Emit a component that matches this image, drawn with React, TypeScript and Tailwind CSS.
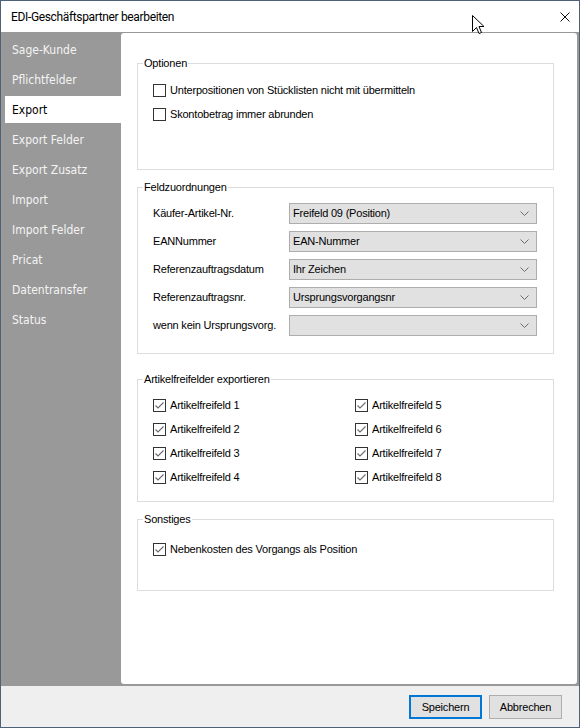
import React from 'react';

const NAV = ['Sage-Kunde', 'Pflichtfelder', 'Export', 'Export Felder', 'Export Zusatz', 'Import', 'Import Felder', 'Pricat', 'Datentransfer', 'Status'];

function CheckBox({ checked }: { checked?: boolean }) {
    return (
        <span className="flex h-[13px] w-[13px] shrink-0 items-center justify-center border border-[#333333] bg-white">
            {checked && (
                <svg width="11" height="11" viewBox="0 0 11 11">
                    <path d="M1.5 5.5 L4 8 L9.5 2.5" fill="none" stroke="#6a6a6a" strokeWidth="1.1" />
                </svg>
            )}
        </span>
    );
}

function Check({ label, checked }: { label: string; checked?: boolean }) {
    return (
        <div className="flex h-[24px] items-center gap-[4px]">
            <CheckBox checked={checked} />
            <span>{label}</span>
        </div>
    );
}

function Combo({ value }: { value: string }) {
    return (
        <div className="flex h-[21px] w-[248px] items-center justify-between border border-[#adadad] bg-[#e1e1e1] pl-[3px] pr-[7px]">
            <span>{value}</span>
            <svg width="9" height="5" viewBox="0 0 9 5">
                <path d="M0.5 0.5 L4.5 4.5 L8.5 0.5" fill="none" stroke="#6d6d6d" strokeWidth="1" />
            </svg>
        </div>
    );
}

function Group({ title, className, children }: { title: string; className: string; children?: React.ReactNode }) {
    return (
        <div className={`relative w-[417px] border border-[#dcdcdc] ${className}`}>
            <span className="absolute -top-[8px] left-[5px] bg-white px-[1px] leading-[14px]">{title}</span>
            {children}
        </div>
    );
}

export default function App() {
    return (
        <div className="relative flex h-[728px] w-[580px] flex-col overflow-hidden border border-[#4d6278] bg-white font-['Liberation_Sans',Arial,sans-serif] text-[11px] tracking-[-0.2px] text-black">
            {/* title bar */}
            <div className="flex h-[31px] shrink-0 items-center justify-between bg-white pl-[10px] pr-[9px]">
                <span className="font-['Roboto',sans-serif] text-[12px] tracking-[-0.35px]">EDI-Geschäftspartner bearbeiten</span>
                <svg width="10" height="10" viewBox="0 0 10 10">
                    <path d="M0.5 0.5 L9.5 9.5 M9.5 0.5 L0.5 9.5" stroke="#111111" strokeWidth="1" />
                </svg>
            </div>

            {/* mouse cursor */}
            <svg className="absolute left-[471px] top-[14px]" width="13" height="20" viewBox="0 0 13 20">
                <path d="M0.5 0.5 L0.5 16.5 L4.5 12.5 L7 18.5 L9.5 17.5 L7 11.5 L12 11.5 Z" fill="white" stroke="black" strokeWidth="1" strokeLinejoin="round" />
            </svg>

            <div className="flex flex-1 bg-[#999999] pb-[2px] pr-[2px] pt-[1px]">
                {/* sidebar */}
                <div className="w-[120px] shrink-0 pl-[4px] pt-[3px] font-['DejaVu_Sans_Condensed','DejaVu_Sans',sans-serif] text-[12px] tracking-normal">
                    {NAV.map(n => (
                        <div key={n} className={`mb-[3px] flex h-[27px] items-center pl-[7px] ${n === 'Export' ? 'bg-white text-black' : 'text-[#f4f4f4]'}`}>
                            {n}
                        </div>
                    ))}
                </div>

                {/* content panel */}
                <div className="flex-1 rounded-[3px] bg-white pl-[16px]">
                    <Group title="Optionen" className="mt-[30px] h-[107px] pl-[15px] pt-[14px]">
                        <Check label="Unterpositionen von Stücklisten nicht mit übermitteln" />
                        <Check label="Skontobetrag  immer abrunden" />
                    </Group>

                    <Group title="Feldzuordnungen" className="mt-[17px] h-[167px] pl-[15px] pt-[11px]">
                        {[
                            ['Käufer-Artikel-Nr.', 'Freifeld 09 (Position)'],
                            ['EANNummer', 'EAN-Nummer'],
                            ['Referenzauftragsdatum', 'Ihr Zeichen'],
                            ['Referenzauftragsnr.', 'Ursprungsvorgangsnr'],
                            ['wenn kein Ursprungsvorg.', ''],
                        ].map(([l, v]) => (
                            <div key={l} className="flex h-[28px] items-center">
                                <span className="w-[136px]">{l}</span>
                                <Combo value={v} />
                            </div>
                        ))}
                    </Group>

                    <Group title="Artikelfreifelder exportieren" className="mt-[25px] h-[123px] pl-[15px] pt-[13px]">
                        <div className="grid grid-cols-[202px_auto]">
                            {[1, 5, 2, 6, 3, 7, 4, 8].map(i => (
                                <Check key={i} label={`Artikelfreifeld ${i}`} checked />
                            ))}
                        </div>
                    </Group>

                    <Group title="Sonstiges" className="mt-[17px] h-[72px] pl-[15px] pt-[17px]">
                        <Check label="Nebenkosten des Vorgangs als Position" checked />
                    </Group>
                </div>
            </div>

            {/* footer */}
            <div className="flex h-[41px] shrink-0 items-start justify-end gap-[7px] bg-[#efefef] pr-[17px] pt-[9px]">
                <button className="flex h-[24px] w-[73px] items-center justify-center border-2 border-[#0078d7] bg-[#e1e1e1]">Speichern</button>
                <button className="flex h-[24px] w-[73px] items-center justify-center border border-[#adadad] bg-[#e1e1e1]">Abbrechen</button>
            </div>
        </div>
    );
}
